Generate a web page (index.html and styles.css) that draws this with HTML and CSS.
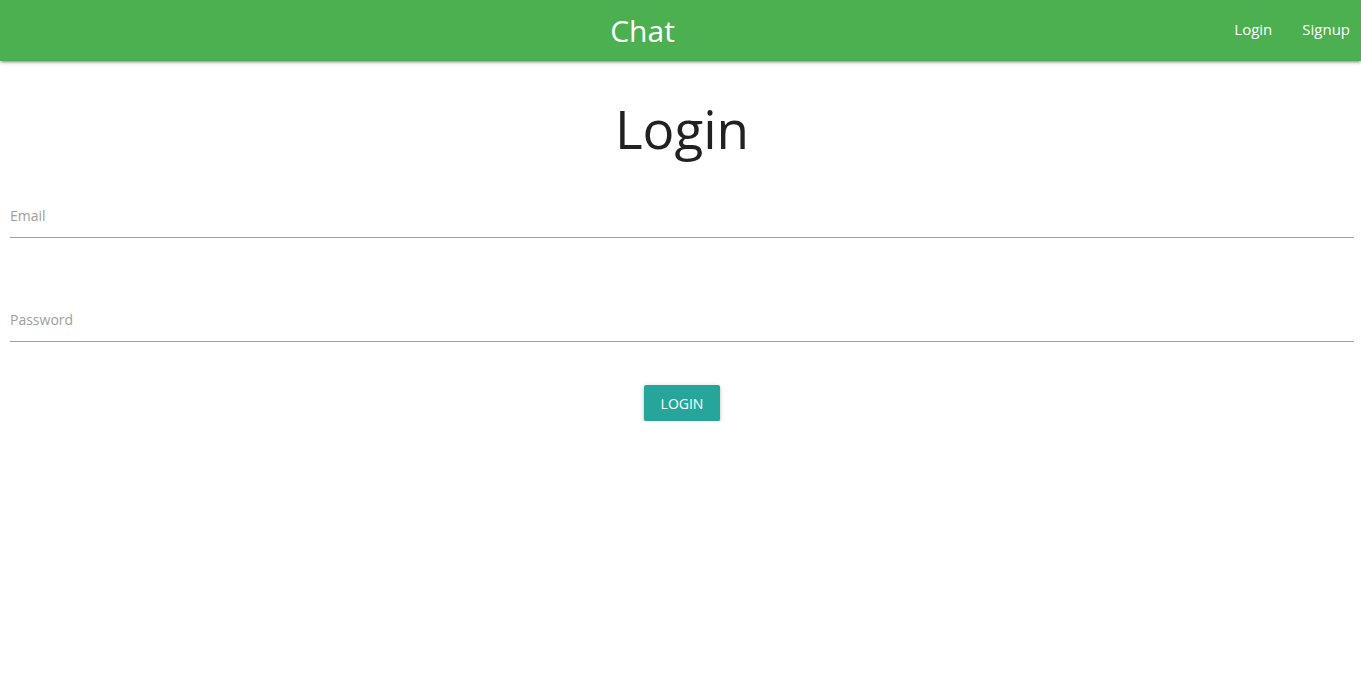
FILE: index.html
```html
<!DOCTYPE html>
<html>
<head>
<meta charset="utf-8">
<link rel="stylesheet" href="styles.css">
</head>
<body>
<nav class="navbar">
  <div class="nav-side"></div>
  <a class="brand" href="#">Chat</a>
  <ul class="nav-links">
    <li><a href="#">Login</a></li>
    <li><a href="#">Signup</a></li>
  </ul>
</nav>
<main class="page">
  <h1 class="title">Login</h1>
  <form class="form">
    <div class="field"><label class="label">Email</label><input class="input" type="email"></div>
    <div class="field"><label class="label">Password</label><input class="input" type="password"></div>
    <div class="actions"><button class="btn" type="button">Login</button></div>
  </form>
</main>
</body>
</html>
```
FILE: styles.css
```css
* { box-sizing: border-box; }
body {
  margin: 0;
  font-family: "Open Sans", "Noto Sans", sans-serif;
  color: rgba(0,0,0,0.87);
  background: #fff;
}
.navbar {
  height: 61px;
  background: #4caf50;
  display: flex;
  align-items: center;
  box-shadow: 0 2px 2px 0 rgba(0,0,0,.14), 0 3px 1px -2px rgba(0,0,0,.12), 0 1px 5px 0 rgba(0,0,0,.2);
  position: relative;
}
.nav-side { flex: 1; }
.brand {
  color: #fff;
  text-decoration: none;
  font-size: 30px;
  margin-right: 76px;
  margin-bottom: 1px;
}
.nav-links {
  flex: 1;
  display: flex;
  justify-content: flex-end;
  list-style: none;
  margin: 0;
  padding: 0;
}
.nav-links a {
  display: block;
  color: #fff;
  text-decoration: none;
  font-size: 15px;
  padding: 0 15px;
  line-height: 56px;
  margin-bottom: 4px;
}
.nav-links li:last-child a { padding-right: 11px; }
.page { padding: 0 7px 0 10px; }
.title {
  text-align: center;
  font-weight: 400;
  font-size: 53px;
  margin: 23px 0 0;
  line-height: 90px;
  color: #212121;
}
.form { margin-top: 20px; }
.field {
  position: relative;
  padding-top: 12px;
  margin-bottom: 60px;
}
.label {
  display: block;
  font-size: 14px;
  color: #9e9e9e;
  line-height: 20px;
}
.input {
  display: block;
  width: 100%;
  border: none;
  border-bottom: 1px solid #9e9e9e;
  outline: none;
  height: 12px;
  padding: 0;
  background: transparent;
}
.actions {
  display: flex;
  justify-content: center;
  margin-top: -17px;
}
.btn {
  background: #26a69a;
  color: #fff;
  border: none;
  border-radius: 2px;
  height: 36px;
  padding: 0 17px;
  text-transform: uppercase;
  font-family: inherit;
  font-size: 14px;
  letter-spacing: 0;
  box-shadow: 0 2px 2px 0 rgba(0,0,0,.14), 0 3px 1px -2px rgba(0,0,0,.12), 0 1px 5px 0 rgba(0,0,0,.2);
}
```
